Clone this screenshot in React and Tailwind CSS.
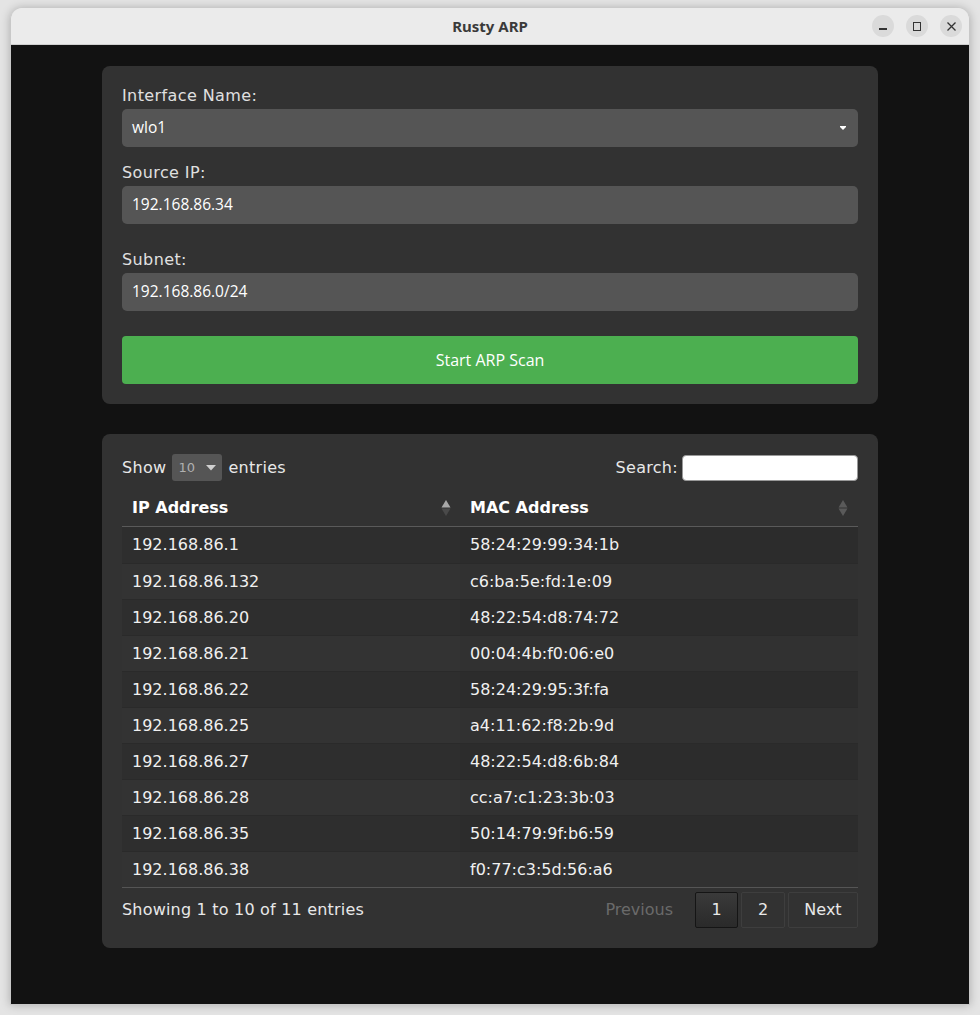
import React from "react";

const rows = [
  ["192.168.86.1", "58:24:29:99:34:1b"],
  ["192.168.86.132", "c6:ba:5e:fd:1e:09"],
  ["192.168.86.20", "48:22:54:d8:74:72"],
  ["192.168.86.21", "00:04:4b:f0:06:e0"],
  ["192.168.86.22", "58:24:29:95:3f:fa"],
  ["192.168.86.25", "a4:11:62:f8:2b:9d"],
  ["192.168.86.27", "48:22:54:d8:6b:84"],
  ["192.168.86.28", "cc:a7:c1:23:3b:03"],
  ["192.168.86.35", "50:14:79:9f:b6:59"],
  ["192.168.86.38", "f0:77:c3:5d:56:a6"],
];

function SortIcon({ active }) {
  return (
    <svg width="10" height="18" viewBox="0 0 10 18" className="shrink-0">
      <path d="M5 1 L9.5 8.5 L0.5 8.5 Z" fill={active ? "#a8a8a8" : "#5a5a5a"} />
      <path d="M5 17 L9.5 9.5 L0.5 9.5 Z" fill={active ? "#4a4a4a" : "#5a5a5a"} />
    </svg>
  );
}

export default function App() {
  const dv = { fontFamily: '"DejaVu Sans", Verdana, sans-serif' };
  const ub = { fontFamily: '"Open Sans", "Noto Sans", sans-serif' };
  return (
    <div className="w-[980px] h-[1015px] bg-[#e4e4e4] pt-[8px] px-[10px] overflow-hidden">
      <div className="w-[960px] h-[997px] flex flex-col rounded-t-[12px] overflow-hidden shadow-[0_0_10px_rgba(0,0,0,0.25)] border-x border-b border-[#c8c8c8]">
        {/* title bar */}
        <div className="h-[37px] bg-[#ebebeb] border-b border-[#cfcfcf] flex items-center relative shrink-0">
          <div className="flex-1 text-center text-[15px] font-bold text-[#3a3a3a]" style={{ fontFamily: '"Noto Sans", sans-serif' }}>
            Rusty ARP
          </div>
          <div className="absolute right-[7px] top-[7px] flex gap-[12px]">
            <div className="w-[22px] h-[22px] rounded-full bg-[#dadada] flex items-center justify-center">
              <div className="w-[8px] h-[1.5px] bg-[#333] mt-[6px]" />
            </div>
            <div className="w-[22px] h-[22px] rounded-full bg-[#dadada] flex items-center justify-center">
              <div className="w-[8px] h-[9px] border border-[#333]" />
            </div>
            <div className="w-[22px] h-[22px] rounded-full bg-[#dadada] flex items-center justify-center">
              <svg width="9" height="9" viewBox="0 0 9 9">
                <path d="M0.5 0.5 L8.5 8.5 M8.5 0.5 L0.5 8.5" stroke="#333" strokeWidth="1.3" />
              </svg>
            </div>
          </div>
        </div>

        {/* content */}
        <div className="flex-1 bg-[#121212] pt-[21px] flex flex-col items-center gap-[30px]">
          {/* form card */}
          <div className="w-[776px] bg-[#323232] rounded-[8px] p-[20px] flex flex-col">
            <div className="text-[16px] leading-[19px] tracking-[0.4px] text-[#e0e0e0] mb-[4px]" style={dv}>Interface Name:</div>
            <div className="h-[38px] bg-[#555555] rounded-[5px] flex items-center justify-between px-[10px] text-[15.5px] text-white" style={ub}>
              <span>wlo1</span>
              <svg width="8" height="6" viewBox="0 0 8 6" className="mr-[1px]"><path d="M1 2 L7 2 L4 5 Z" fill="#fff" /><rect x="1" y="1" width="6" height="1" fill="#fff" /></svg>
            </div>
            <div className="text-[16px] leading-[19px] tracking-[0.4px] text-[#e0e0e0] mt-[16px] mb-[4px]" style={dv}>Source IP:</div>
            <div className="h-[38px] bg-[#555555] rounded-[5px] flex items-center px-[10px] text-[15.5px] text-white" style={ub}>
              192.168.86.34
            </div>
            <div className="text-[16px] leading-[19px] tracking-[0.4px] text-[#e0e0e0] mt-[26px] mb-[4px]" style={dv}>Subnet:</div>
            <div className="h-[38px] bg-[#555555] rounded-[5px] flex items-center px-[10px] text-[15.5px] text-white" style={ub}>
              192.168.86.0/24
            </div>
            <div className="mt-[25px] h-[48px] bg-[#4caf50] rounded-[4px] flex items-center justify-center text-[16px] text-white" style={ub}>
              Start ARP Scan
            </div>
          </div>

          {/* table card */}
          <div className="w-[776px] bg-[#323232] rounded-[8px] p-[20px] flex flex-col text-[#e8e8e8]" style={dv}>
            <div className="flex items-center justify-between h-[27px] text-[16px] tracking-[0.3px]">
              <div className="flex items-center gap-[6px]">
                <span>Show</span>
                <div className="w-[50px] h-[27px] bg-[#555555] rounded-[3px] flex items-center justify-between pl-[6px] pr-[6px] text-[13px] text-[#b0b0b0] tracking-normal">
                  <span>10</span>
                  <svg width="10" height="6" viewBox="0 0 10 6"><path d="M0 0 L10 0 L5 5.5 Z" fill="#d0d0d0" /></svg>
                </div>
                <span>entries</span>
              </div>
              <div className="flex items-center gap-[4px]">
                <span>Search:</span>
                <div className="w-[176px] h-[26px] bg-white rounded-[4px] border border-[#999]" />
              </div>
            </div>

            <div className="mt-[9px] flex flex-col">
              <div className="flex h-[37px] border-b border-[#5a5a5a] text-[16px] font-bold text-white">
                <div className="w-[338px] flex items-center justify-between pl-[10px] pr-[9px]">
                  <span>IP Address</span>
                  <SortIcon active />
                </div>
                <div className="flex-1 flex items-center justify-between pl-[10px] pr-[10px]">
                  <span>MAC Address</span>
                  <SortIcon />
                </div>
              </div>
              {rows.map(([ip, mac], i) => (
                <div
                  key={ip}
                  className={
                    "flex h-[36px] text-[16px] text-[#f0f0f0] " +
                    (i === 0 ? "" : "border-t border-[#2a2a2a] ") +
                    (i % 2 === 0 ? "bg-[#2c2c2c]" : "bg-[#313131]")
                  }
                >
                  <div className={"w-[338px] flex items-center pl-[10px] " + (i % 2 === 0 ? "bg-[#2e2e2e]" : "bg-[#333333]")}>{ip}</div>
                  <div className="flex-1 flex items-center pl-[10px]">{mac}</div>
                </div>
              ))}
              <div className="border-t border-[#555555]" />
            </div>

            <div className="flex items-center justify-between mt-[4px] h-[36px] text-[16px]">
              <span className="tracking-[0.2px]">Showing 1 to 10 of 11 entries</span>
              <div className="flex items-center gap-[3px]">
                <span className="text-[#6a6a6a] mr-[19px]">Previous</span>
                <div className="w-[43px] h-[36px] rounded-[2px] border border-[#151515] bg-gradient-to-b from-[#3a3a3a] to-[#2a2a2a] flex items-center justify-center">1</div>
                <div className="w-[44px] h-[36px] rounded-[2px] border border-[#3e3e3e] flex items-center justify-center">2</div>
                <div className="w-[70px] h-[36px] rounded-[2px] border border-[#3e3e3e] flex items-center justify-center">Next</div>
              </div>
            </div>
          </div>
        </div>
      </div>
    </div>
  );
}
